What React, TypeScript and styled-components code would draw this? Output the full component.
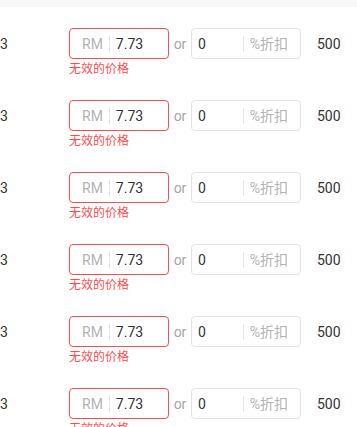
import React from "react";
import styled, { createGlobalStyle } from "styled-components";

const Global = createGlobalStyle`
  html, body { margin: 0; padding: 0; background: #fff; }
  body { font-family: Roboto, "Noto Sans CJK SC", sans-serif; color: #333; overflow: hidden; }
`;

const TopStrip = styled.div`
  height: 7px;
  background: #f8f8f8;
`;

const List = styled.div`
  padding-top: 21px;
`;

const Row = styled.div`
  height: 72px;
  display: flex;
  align-items: flex-start;
`;

const Cell = styled.div<{ $w?: number }>`
  height: 31px;
  display: flex;
  align-items: center;
  font-size: 14px;
  color: #333;
  ${(p) => (p.$w ? `width: ${p.$w}px; flex: none;` : "")}
`;

const Or = styled.div`
  width: 22px;
  height: 31px;
  display: flex;
  align-items: center;
  justify-content: center;
  font-size: 14px;
  color: #a6a6a6;
  flex: none;
`;

const FieldCol = styled.div`
  display: flex;
  flex-direction: column;
  flex: none;
`;

const Box = styled.div<{ $w: number; $error?: boolean }>`
  box-sizing: border-box;
  width: ${(p) => p.$w}px;
  height: 31px;
  border: 1px solid ${(p) => (p.$error ? "#ff4d4f" : "#e3e3e3")};
  border-radius: 4px;
  display: flex;
  align-items: center;
  font-size: 14px;
`;

const Addon = styled.span<{ $side: "left" | "right" }>`
  color: #b3b3b3;
  display: flex;
  align-items: center;
  white-space: nowrap;
  ${(p) =>
    p.$side === "left"
      ? `padding-left: 12px; padding-right: 6px; border-right: 1px solid #e6e6e6;`
      : `padding-left: 6px; padding-right: 12px; border-left: 1px solid #e6e6e6;`}
  height: 16px;
  line-height: 16px;
`;

const Value = styled.span`
  flex: 1;
  color: #333;
  padding-left: 6px;
`;

const ErrorText = styled.div`
  font-size: 12px;
  line-height: 17px;
  color: #ff4d4f;
  margin-top: 2px;
  white-space: nowrap;
`;

const Stock = styled(Cell)`
  padding-left: 16px;
`;

export default function App() {
  const rows = Array.from({ length: 6 });
  return (
    <>
      <Global />
      <TopStrip />
      <List>
        {rows.map((_, i) => (
          <Row key={i}>
            <Cell $w={69}>3</Cell>
            <FieldCol>
              <Box $w={100} $error>
                <Addon $side="left">RM</Addon>
                <Value>7.73</Value>
              </Box>
              <ErrorText>无效的价格</ErrorText>
            </FieldCol>
            <Or>or</Or>
            <Box $w={110}>
              <Value>0</Value>
              <Addon $side="right">%折扣</Addon>
            </Box>
            <Stock>500</Stock>
          </Row>
        ))}
      </List>
    </>
  );
}
